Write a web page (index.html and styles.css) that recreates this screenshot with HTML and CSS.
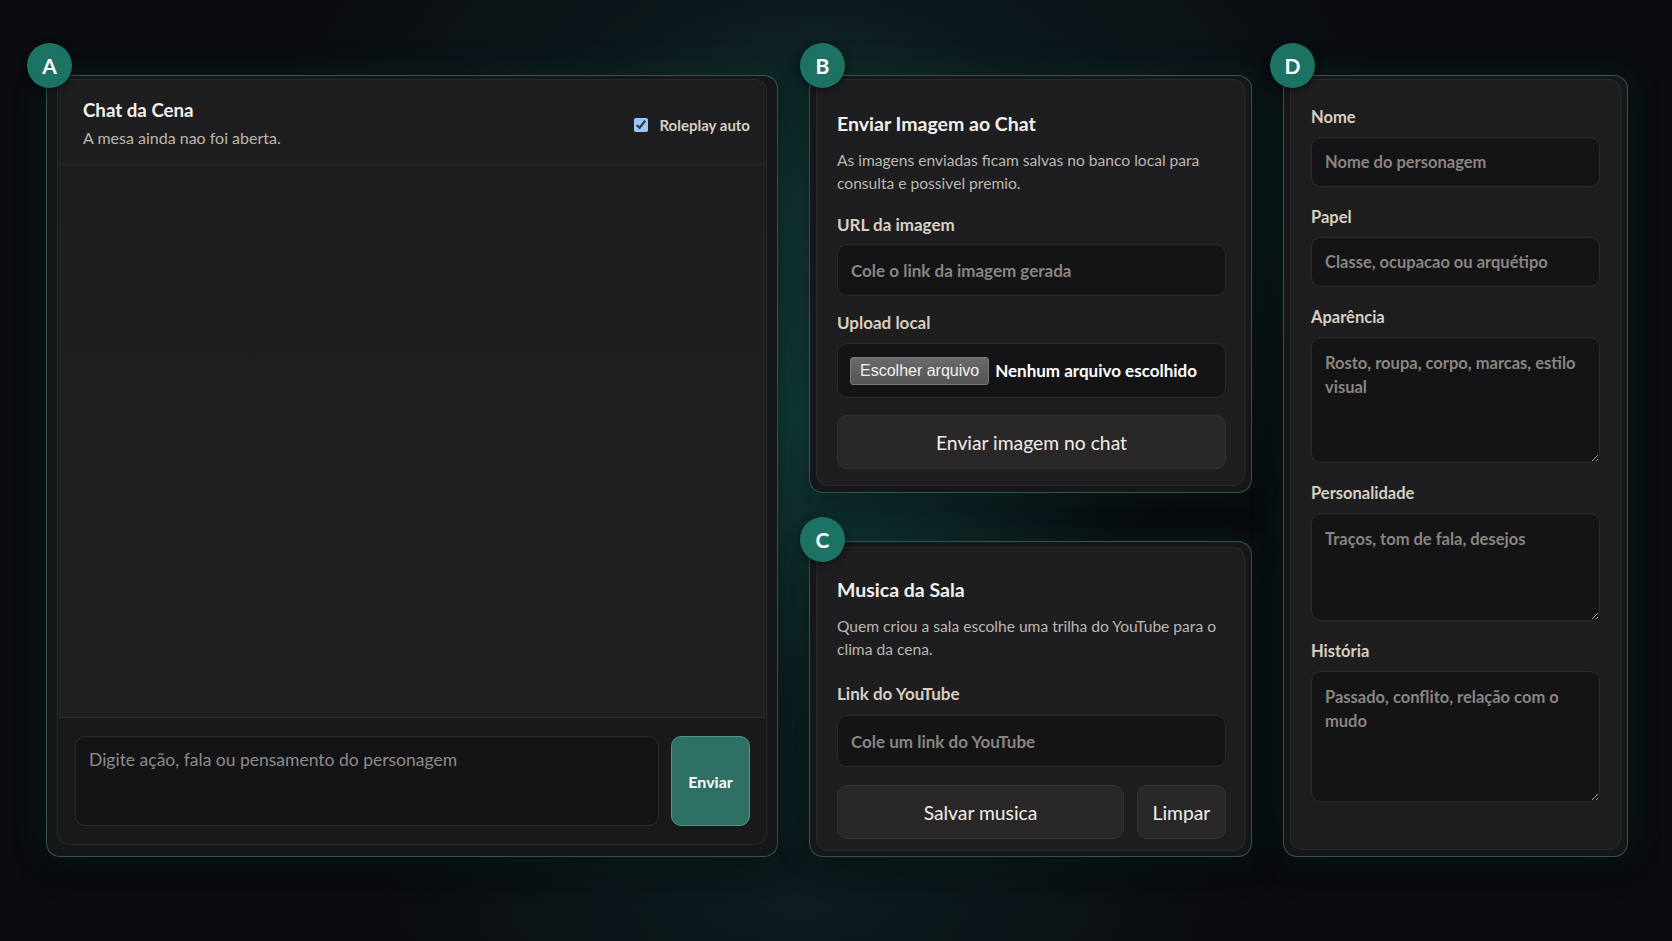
FILE: index.html
```html
<!DOCTYPE html>
<html lang="pt-BR">
<head>
    <meta charset="UTF-8">
    <meta name="viewport" content="width=device-width, initial-scale=1.0">
    <title>Mesa - Chat da Cena</title>
    <link rel="stylesheet" href="styles.css">
</head>
<body>
    <div class="board">
        <!-- A: chat -->
        <section class="frame frame-chat">
            <span class="badge">A</span>
            <div class="card chat">
                <header class="chat-head">
                    <div>
                        <h2 class="card-title">Chat da Cena</h2>
                        <p class="chat-status">A mesa ainda nao foi aberta.</p>
                    </div>
                    <label class="auto-toggle">
                        <input type="checkbox" checked>
                        Roleplay auto
                    </label>
                </header>
                <div class="chat-log"></div>
                <form class="chat-form" onsubmit="return false">
                    <textarea class="chat-input" placeholder="Digite ação, fala ou pensamento do personagem"></textarea>
                    <button class="send-btn" type="submit">Enviar</button>
                </form>
            </div>
        </section>

        <div class="side">
            <!-- B: imagem -->
            <section class="frame frame-img">
                <span class="badge">B</span>
                <div class="card panel">
                    <h3 class="panel-title">Enviar Imagem ao Chat</h3>
                    <p class="panel-desc">As imagens enviadas ficam salvas no banco local para consulta e possivel premio.</p>

                    <div class="field">
                        <label class="field-label">URL da imagem</label>
                        <input class="field-input" type="text" placeholder="Cole o link da imagem gerada">
                    </div>

                    <div class="field field-tight">
                        <label class="field-label">Upload local</label>
                        <div class="file-box">
                            <span class="file-btn">Escolher arquivo</span>
                            <span class="file-name">Nenhum arquivo escolhido</span>
                        </div>
                    </div>

                    <button class="ghost-btn wide" type="button">Enviar imagem no chat</button>
                </div>
            </section>

            <!-- C: musica -->
            <section class="frame frame-music">
                <span class="badge">C</span>
                <div class="card panel panel-music">
                    <h3 class="panel-title">Musica da Sala</h3>
                    <p class="panel-desc">Quem criou a sala escolhe uma trilha do YouTube para o clima da cena.</p>

                    <div class="field field-loose">
                        <label class="field-label">Link do YouTube</label>
                        <input class="field-input" type="text" placeholder="Cole um link do YouTube">
                    </div>

                    <div class="btn-row">
                        <button class="ghost-btn grow" type="button">Salvar musica</button>
                        <button class="ghost-btn small" type="button">Limpar</button>
                    </div>
                </div>
            </section>
        </div>

        <!-- D: personagem -->
        <section class="frame frame-char">
            <span class="badge">D</span>
            <div class="card panel panel-char">
                <div class="field first">
                    <label class="field-label">Nome</label>
                    <input class="field-input short" type="text" placeholder="Nome do personagem">
                </div>
                <div class="field">
                    <label class="field-label">Papel</label>
                    <input class="field-input short" type="text" placeholder="Classe, ocupacao ou arquétipo">
                </div>
                <div class="field">
                    <label class="field-label">Aparência</label>
                    <textarea class="field-area area-look" placeholder="Rosto, roupa, corpo, marcas, estilo visual"></textarea>
                </div>
                <div class="field">
                    <label class="field-label">Personalidade</label>
                    <textarea class="field-area area-mind" placeholder="Traços, tom de fala, desejos"></textarea>
                </div>
                <div class="field">
                    <label class="field-label">História</label>
                    <textarea class="field-area area-story" placeholder="Passado, conflito, relação com o mudo"></textarea>
                </div>
            </div>
        </section>
    </div>
</body>
</html>
```

FILE: styles.css
```css
* {
    margin: 0;
    padding: 0;
    box-sizing: border-box;
}

html, body {
    height: 100%;
}

body {
    font-family: Lato, "Open Sans", sans-serif;
    color: #ece8e3;
    color-scheme: dark;
    overflow: hidden;
    background:
        radial-gradient(ellipse 420px 560px at 800px 420px, rgba(24, 88, 82, 0.55), rgba(24, 88, 82, 0) 78%),
        radial-gradient(ellipse 700px 520px at 830px 180px, rgba(20, 62, 62, 0.45), rgba(20, 62, 62, 0) 80%),
        radial-gradient(ellipse 520px 260px at 800px 900px, rgba(20, 62, 62, 0.35), rgba(20, 62, 62, 0) 80%),
        #0a0c10;
}

.board {
    display: grid;
    grid-template-columns: 732px 443px 345px;
    column-gap: 31px;
    padding: 75px 0 0 46px;
    height: 857px;
}

/* rahmen + badges */
.frame {
    position: relative;
    display: flex;
    flex-direction: column;
    padding: 3px 6px 6px;
    background: #161719;
    border: 1px solid rgba(78, 148, 133, 0.5);
    border-radius: 14px;
    box-shadow: 0 0 36px rgba(26, 100, 92, 0.2), 0 12px 30px rgba(0, 0, 0, 0.45);
}

.frame > .card {
    flex: 1;
}

.frame-chat {
    padding: 3px 10px 11px;
}

.frame-music {
    flex: 1;
    padding: 5px 6px 5px;
}

.badge {
    position: absolute;
    top: -33px;
    width: 45px;
    height: 45px;
    border-radius: 50%;
    background: #1d7363;
    color: #fff;
    font-size: 21px;
    font-weight: 700;
    display: flex;
    align-items: center;
    justify-content: center;
    box-shadow: 0 2px 8px rgba(0, 0, 0, 0.45);
    z-index: 2;
}

.frame-chat .badge { left: -20px; }
.frame-img .badge { left: -10px; }
.frame-music .badge { left: -10px; top: -25px; }
.frame-char .badge { left: -14px; }

.card {
    background: #1e1e21;
    border: 1px solid rgba(255, 255, 255, 0.05);
    border-radius: 12px;
}

.side {
    display: flex;
    flex-direction: column;
    gap: 48px;
}

/* chat */
.chat {
    display: flex;
    flex-direction: column;
    overflow: hidden;
}

.chat-head {
    display: flex;
    justify-content: space-between;
    align-items: flex-start;
    padding: 18px 16px 15px 25px;
    border-bottom: 1px solid #2c2c30;
}

.card-title {
    font-size: 18.7px;
    line-height: 24px;
    font-weight: 700;
    color: #f4f1ed;
}

.chat-status {
    margin-top: 5px;
    font-size: 16px;
    line-height: 22px;
    color: #bcb6ae;
}

.auto-toggle {
    display: flex;
    align-items: center;
    gap: 11px;
    margin-top: 16px;
    font-size: 15px;
    line-height: 22px;
    font-weight: 700;
    color: #d8cec1;
}

.auto-toggle input {
    width: 14px;
    height: 14px;
    margin: 0;
}

.chat-log {
    flex: 1;
    background: linear-gradient(180deg, #1e1e21, #202023);
}

.chat-form {
    display: flex;
    gap: 12px;
    padding: 18px 16px 18px 17px;
    background: #19191b;
    border-top: 1px solid #2c2c30;
}

.chat-input {
    flex: 1;
    height: 90px;
    padding: 11px 13px;
    background: #141416;
    border: 1px solid #2c2c2f;
    border-radius: 10px;
    color: #ece8e3;
    font-family: inherit;
    font-size: 17.5px;
    line-height: 24px;
    resize: none;
    outline: none;
}

.chat-input::placeholder {
    color: #8d8b8a;
}

.send-btn {
    width: 79px;
    background: #2e7164;
    border: 1px solid #4b9886;
    border-radius: 10px;
    color: #fff;
    font-family: inherit;
    font-size: 16px;
    font-weight: 700;
    cursor: pointer;
}

/* panels */
.panel {
    padding: 31px 18px 16px 20px;
}

.panel-music {
    padding: 29px 18px 11px 20px;
}

.panel-char {
    padding: 26px 20px 16px 20px;
}

.panel-title {
    font-size: 19.5px;
    line-height: 26px;
    font-weight: 700;
    color: #f4f1ed;
}

.panel-desc {
    margin-top: 12px;
    font-size: 15.6px;
    line-height: 23px;
    color: #bcb6ae;
}

.field {
    display: flex;
    flex-direction: column;
    margin-top: 19px;
}

.field-tight {
    margin-top: 16px;
}

.field-loose {
    margin-top: 22px;
}

.field.first {
    margin-top: 0;
}

.field-label {
    font-size: 17px;
    line-height: 22px;
    font-weight: 700;
    color: #d8cec1;
    margin-bottom: 8px;
}

.panel-char .field-label {
    font-size: 16.5px;
}

.panel-char .field-label,
.field-tight .field-label {
    margin-bottom: 9px;
}

.field-loose .field-label {
    margin-bottom: 10px;
}

.field-input,
.field-area {
    width: 100%;
    background: #141416;
    border: 1px solid #2b2b2e;
    border-radius: 10px;
    color: #ece8e3;
    font-family: inherit;
    font-size: 17px;
    font-weight: 700;
    outline: none;
}

.panel-char .field-input,
.panel-char .field-area {
    font-size: 16.5px;
}

.field-input {
    height: 52px;
    padding: 0 13px;
}

.field-input.short {
    height: 50px;
}

.field-area {
    padding: 13px 13px;
    line-height: 24px;
    resize: vertical;
}

.field-input::placeholder,
.field-area::placeholder {
    color: #8a8582;
}

.area-look { height: 126px; }
.area-mind { height: 108px; }
.area-story { height: 131px; }

.file-box {
    display: flex;
    align-items: center;
    gap: 6px;
    height: 55px;
    padding: 0 12px;
    background: #141416;
    border: 1px solid #2b2b2e;
    border-radius: 10px;
}

.file-btn {
    padding: 4px 9px;
    background: linear-gradient(180deg, #6a6a6a, #555);
    border: 1px solid #777;
    border-radius: 3px;
    font-family: "Liberation Sans", Arial, sans-serif;
    font-size: 16px;
    line-height: 18px;
    color: #f0f0f0;
}

.file-name {
    font-size: 17px;
    font-weight: 700;
    color: #fff;
}

.ghost-btn {
    height: 54px;
    background: #2a2729;
    border: 1px solid #353134;
    border-radius: 10px;
    color: #f2eeea;
    font-family: inherit;
    font-size: 19.3px;
    cursor: pointer;
}

.ghost-btn.wide {
    width: 100%;
    margin-top: 17px;
}

.btn-row {
    display: flex;
    gap: 13px;
    margin-top: 18px;
}

.ghost-btn.grow {
    flex: 1;
}

.ghost-btn.small {
    width: 89px;
}
```
